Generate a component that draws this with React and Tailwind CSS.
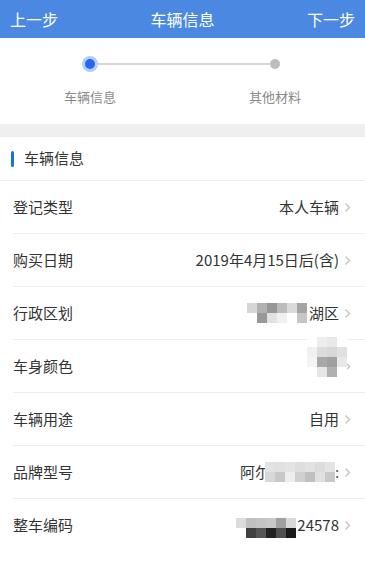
import React from 'react';

// mosaic cells, written out so Tailwind picks them up
const AREA_MOSAIC = [
    ['bg-[#d6d6d6]', 'bg-[#b0b0b0]', 'bg-[#969696]', 'bg-[#bcbcbc]', 'bg-[#dadada]', 'bg-[#a4a4a4]'],
    ['bg-white', 'bg-[#989898]', 'bg-[#e2e2e2]', 'bg-[#f0f0f0]', 'bg-white', 'bg-[#c6c6c6]'],
];

const COLOR_MOSAIC = [
    ['bg-white', 'bg-[#eeeeee]', 'bg-[#e8e8e8]', 'bg-white'],
    ['bg-[#f0f0f0]', 'bg-[#dcdcdc]', 'bg-[#d8d8d8]', 'bg-[#e0e0e0]'],
    ['bg-[#f4f4f4]', 'bg-[#a8a8a8]', 'bg-[#a0a0a0]', 'bg-[#e8e8e8]'],
    ['bg-white', 'bg-[#e6e6e6]', 'bg-[#b0b0b0]', 'bg-white'],
];

const MODEL_MOSAIC = [
    ['bg-[#e2e2e2]', 'bg-[#e0e0e0]', 'bg-[#e4e4e4]', 'bg-[#dedede]', 'bg-[#e2e2e2]', 'bg-[#dcdcdc]', 'bg-[#e4e4e4]'],
    ['bg-[#d8d8d8]', 'bg-[#c8c8c8]', 'bg-[#eeeeee]', 'bg-[#d0d0d0]', 'bg-[#c0c0c0]', 'bg-[#e0e0e0]', 'bg-[#c8c8c8]'],
];

const VIN_MOSAIC = [
    ['bg-[#dcdcdc]', 'bg-[#c0c0c0]', 'bg-[#c4c4c4]', 'bg-[#c8c8c8]', 'bg-[#a0a0a0]', 'bg-[#d8d8d8]'],
    ['bg-white', 'bg-[#404040]', 'bg-[#555555]', 'bg-[#222222]', 'bg-[#505050]', 'bg-[#1a1a1a]'],
];

function Mosaic({ cells, className = '' }) {
    return (
        <div className={`flex flex-col ${className}`}>
            {cells.map((row, i) => (
                <div key={i} className="flex">
                    {row.map((c, j) => (
                        <div key={j} className={`w-[10px] h-[10px] ${c}`} />
                    ))}
                </div>
            ))}
        </div>
    );
}

function Chevron() {
    return (
        <svg width="7" height="11" viewBox="0 0 7 11" className="shrink-0">
            <polyline points="1.5,1.5 5.5,5.5 1.5,9.5" fill="none" stroke="#c4c4c4" strokeWidth="1.4" />
        </svg>
    );
}

function Row({ label, children, last = false }) {
    return (
        <div className={`flex items-center h-[53px] ml-[13px] pr-[14px] ${last ? '' : 'border-b border-[#eeeeee]'}`}>
            <span className="text-[15px] text-[#333333]">{label}</span>
            <div className="ml-auto flex items-center gap-[5px] text-[15px] text-[#333333]">
                {children}
                <Chevron />
            </div>
        </div>
    );
}

export default function App() {
    return (
        <div
            className="w-[365px] h-[569px] bg-white overflow-hidden"
            style={{ fontFamily: '"Noto Sans CJK SC", "Noto Sans", sans-serif' }}
        >
            {/* top bar */}
            <div className="h-[38px] bg-[#4a88e2] flex items-center justify-between px-[10px] text-white text-[16px]">
                <span>上一步</span>
                <span>车辆信息</span>
                <span>下一步</span>
            </div>

            {/* stepper */}
            <div className="h-[86px] pt-[18px]">
                <div className="flex items-center pl-[82px] pr-[85px] h-4">
                    <div className="w-4 h-4 rounded-full bg-[#b3cdf6] flex items-center justify-center">
                        <div className="w-[10px] h-[10px] rounded-full bg-[#2468ee]" />
                    </div>
                    <div className="flex-1 h-[2px] bg-[#d6d6d6]" />
                    <div className="w-[10px] h-[10px] rounded-full bg-[#bdbdbd]" />
                </div>
                <div className="flex justify-between px-[50px] mt-[15px] text-[13px] text-[#8a8a8a]">
                    <span className="w-20 text-center">车辆信息</span>
                    <span className="w-20 text-center">其他材料</span>
                </div>
            </div>

            <div className="h-[13px] bg-[#efefef]" />

            {/* section title */}
            <div className="h-[44px] flex items-center border-b border-[#eeeeee] pl-[11px]">
                <div className="w-[3px] h-[16px] rounded-full bg-[#1f6fe0]" />
                <span className="ml-[10px] text-[15px] text-[#333333]">车辆信息</span>
            </div>

            <Row label="登记类型">
                <span>本人车辆</span>
            </Row>
            <Row label="购买日期">
                <span>2019年4月15日后(含)</span>
            </Row>
            <Row label="行政区划">
                <div className="flex items-center">
                    <Mosaic cells={AREA_MOSAIC} />
                    <span className="ml-[2px]">湖区</span>
                </div>
            </Row>
            <Row label="车身颜色">
                <Mosaic cells={COLOR_MOSAIC} className="mb-[18px] -mr-[8px] relative z-10" />
            </Row>
            <Row label="车辆用途">
                <span>自用</span>
            </Row>
            <Row label="品牌型号">
                <div className="flex items-center">
                    <span>阿尔</span>
                    <Mosaic cells={MODEL_MOSAIC} className="-ml-[5px]" />
                    <span className="w-[4px] overflow-hidden text-[#555555]">:</span>
                </div>
            </Row>
            <Row label="整车编码" last>
                <div className="flex items-center">
                    <Mosaic cells={VIN_MOSAIC} className="mt-[4px]" />
                    <span className="ml-[1px]">24578</span>
                </div>
            </Row>
        </div>
    );
}
